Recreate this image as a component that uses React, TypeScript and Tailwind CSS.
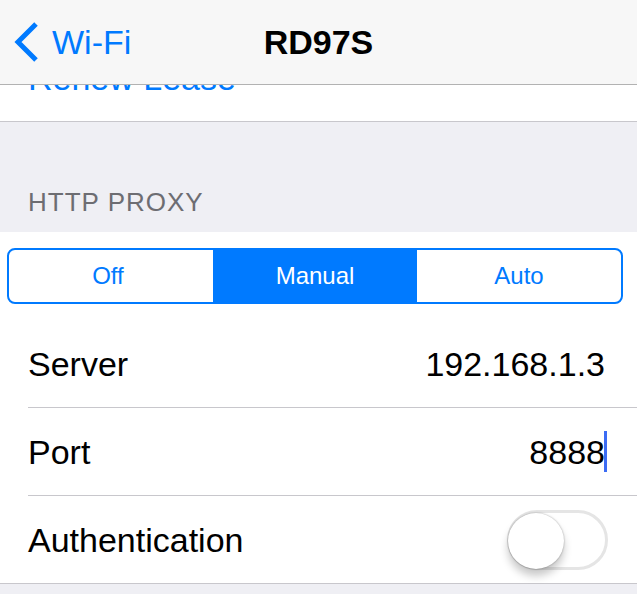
import React from "react";

export default function App() {
  return (
    <div className="w-[637px] h-[594px] overflow-hidden bg-[#efeff4] font-['Liberation_Sans',Arial,sans-serif] text-black">
      {/* Nav bar */}
      <div className="h-[85px] bg-[#f7f7f7] border-b border-[#b2b2b2] grid grid-cols-[1fr_auto_1fr] items-center">
        <div className="flex items-center pl-[12px]">
          <svg width="30" height="42" viewBox="0 0 30 42" className="shrink-0">
            <path d="M24 3 L6 21 L24 39" fill="none" stroke="#007aff" strokeWidth="5" strokeLinecap="butt" strokeLinejoin="miter" />
          </svg>
          <span className="ml-[10px] text-[34px] leading-none text-[#007aff]">Wi-Fi</span>
        </div>
        <div className="text-[34px] leading-none font-bold">RD97S</div>
        <div />
      </div>

      {/* Renew Lease row (scrolled under the bar) */}
      <div className="h-[37px] bg-white border-b border-[#c8c7cc] overflow-hidden">
        <div className="-mt-[37px] pl-[28px] h-[60px] flex items-center text-[34px] leading-none text-[#007aff]">
          Renew Lease
        </div>
      </div>

      {/* Section header */}
      <div className="h-[110px] flex items-end pl-[28px] pb-[17px]">
        <span className="text-[26px] leading-none text-[#6d6d72] tracking-[1px]">HTTP PROXY</span>
      </div>

      {/* Section */}
      <div className="bg-white border-b border-[#c8c7cc]">
        <div className="pt-[16px] pb-[16px] pl-[7px] pr-[14px]">
          <div className="h-[56px] rounded-[8px] border-2 border-[#007aff] grid grid-cols-3 overflow-hidden text-[24px] leading-none">
            <div className="flex items-center justify-center text-[#007aff] pr-[6px]">Off</div>
            <div className="flex items-center justify-center bg-[#007aff] text-white">Manual</div>
            <div className="flex items-center justify-center text-[#007aff]">Auto</div>
          </div>
        </div>

        <div className="pl-[28px]">
          <div className="h-[88px] flex items-center justify-between pr-[32px] border-b border-[#c8c7cc] text-[34px] leading-none">
            <span>Server</span>
            <span>192.168.1.3</span>
          </div>
          <div className="h-[88px] flex items-center justify-between pr-[30px] border-b border-[#c8c7cc] text-[34px] leading-none">
            <span>Port</span>
            <span className="flex items-center">
              8888
              <span className="inline-block w-[3px] h-[41px] bg-[#3c6cf4] -ml-[1px]" />
            </span>
          </div>
          <div className="h-[87px] flex items-center justify-between pr-[29px] text-[34px] leading-none">
            <span>Authentication</span>
            <div className="relative w-[101px] h-[60px] rounded-full border-[3px] border-[#e5e5e5] bg-white">
              <div className="absolute left-[-2px] top-[0px] w-[56px] h-[56px] rounded-full bg-white shadow-[0_7px_8px_rgba(0,0,0,0.22),0_0_2px_rgba(0,0,0,0.35)]" />
            </div>
          </div>
        </div>
      </div>
    </div>
  );
}
